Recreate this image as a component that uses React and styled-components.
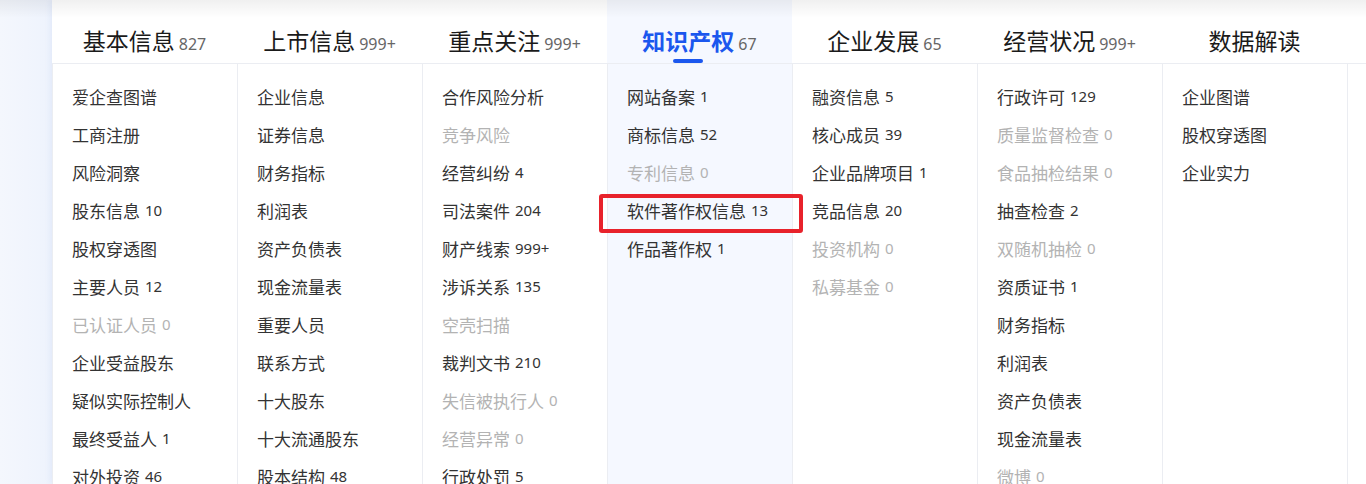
import React from "react";
import styled, { createGlobalStyle } from "styled-components";

const GlobalStyle = createGlobalStyle`
  html, body {
    margin: 0;
    padding: 0;
    height: 100%;
    overflow: hidden;
    background: #f3f6fd;
    font-family: "Noto Sans", "Noto Sans CJK SC", sans-serif;
  }
  #root {
    height: 100%;
  }
`;

const Page = styled.div`
  position: relative;
  display: flex;
  height: 100%;

  &::before {
    content: "";
    position: absolute;
    left: 0;
    right: 0;
    top: 0;
    height: 18px;
    background: linear-gradient(rgba(0, 0, 0, 0.06), rgba(0, 0, 0, 0));
    pointer-events: none;
    z-index: 3;
  }
`;

const Side = styled.div`
  width: 52px;
  flex-shrink: 0;
  background: linear-gradient(to right, #f4f7fd, #eef3fd);
`;

const Panel = styled.div`
  flex: 1;
  background: #fff;
  box-shadow: -2px 0 6px rgba(40, 80, 180, 0.06);
  display: flex;
  flex-direction: column;
`;

const TabBar = styled.div`
  display: grid;
  grid-template-columns: repeat(7, 185px) 1fr;
  border-bottom: 1px solid #ebedf2;
`;

const Tab = styled.div`
  position: relative;
  height: 47px;
  padding-top: 16px;
  display: flex;
  align-items: center;
  justify-content: center;
  background: ${(props) => (props.$active ? "#f5f8ff" : "transparent")};

  &::after {
    content: "";
    display: ${(props) => (props.$active ? "block" : "none")};
    position: absolute;
    left: 50%;
    bottom: 0;
    width: 30px;
    height: 4px;
    margin-left: -27px;
    border-radius: 2px;
    background: #1b57ee;
  }
`;

const TabTitle = styled.span`
  display: flex;
  align-items: baseline;
  gap: 4px;
  & > b {
    font-size: 23px;
    font-weight: ${(props) => (props.$active ? 700 : 400)};
    color: ${(props) => (props.$active ? "#1b57ee" : "#1a1a1a")};
  }
  & > span {
    font-size: 16px;
    color: #666;
  }
`;

const Columns = styled.div`
  flex: 1;
  display: grid;
  grid-template-columns: repeat(7, 185px) 1fr;
`;

const Column = styled.div`
  padding-top: 13px;
  border-left: 1px solid #ebedf2;
  background: ${(props) => (props.$active ? "#f5f8ff" : "transparent")};
`;

const Item = styled.div`
  position: relative;
  height: 38px;
  padding-left: 19px;
  display: flex;
  align-items: center;
  gap: 5px;
  font-size: 17px;
  white-space: nowrap;
  color: ${(props) => (props.$muted ? "#b3b3b3" : "#333")};

  & > span {
    font-size: 15px;
  }

  &::after {
    content: "";
    display: ${(props) => (props.$marked ? "block" : "none")};
    position: absolute;
    left: -9px;
    right: -11px;
    top: 3px;
    bottom: -4px;
    border: 4px solid #e8222b;
    border-radius: 3px;
    z-index: 2;
  }
`;

const tabs = [
  ["基本信息", "827"],
  ["上市信息", "999+"],
  ["重点关注", "999+"],
  ["知识产权", "67"],
  ["企业发展", "65"],
  ["经营状况", "999+"],
  ["数据解读", null],
];

// [label, count, muted, marked]
const columns = [
  [
    ["爱企查图谱"],
    ["工商注册"],
    ["风险洞察"],
    ["股东信息", "10"],
    ["股权穿透图"],
    ["主要人员", "12"],
    ["已认证人员", "0", true],
    ["企业受益股东"],
    ["疑似实际控制人"],
    ["最终受益人", "1"],
    ["对外投资", "46"],
  ],
  [
    ["企业信息"],
    ["证券信息"],
    ["财务指标"],
    ["利润表"],
    ["资产负债表"],
    ["现金流量表"],
    ["重要人员"],
    ["联系方式"],
    ["十大股东"],
    ["十大流通股东"],
    ["股本结构", "48"],
  ],
  [
    ["合作风险分析"],
    ["竞争风险", null, true],
    ["经营纠纷", "4"],
    ["司法案件", "204"],
    ["财产线索", "999+"],
    ["涉诉关系", "135"],
    ["空壳扫描", null, true],
    ["裁判文书", "210"],
    ["失信被执行人", "0", true],
    ["经营异常", "0", true],
    ["行政处罚", "5"],
  ],
  [
    ["网站备案", "1"],
    ["商标信息", "52"],
    ["专利信息", "0", true],
    ["软件著作权信息", "13", false, true],
    ["作品著作权", "1"],
  ],
  [
    ["融资信息", "5"],
    ["核心成员", "39"],
    ["企业品牌项目", "1"],
    ["竞品信息", "20"],
    ["投资机构", "0", true],
    ["私募基金", "0", true],
  ],
  [
    ["行政许可", "129"],
    ["质量监督检查", "0", true],
    ["食品抽检结果", "0", true],
    ["抽查检查", "2"],
    ["双随机抽检", "0", true],
    ["资质证书", "1"],
    ["财务指标"],
    ["利润表"],
    ["资产负债表"],
    ["现金流量表"],
    ["微博", "0", true],
  ],
  [["企业图谱"], ["股权穿透图"], ["企业实力"]],
];

const ACTIVE = 3;

function App() {
  return (
    <>
      <GlobalStyle />
      <Page>
        <Side />
        <Panel>
          <TabBar>
            {tabs.map(([title, count], i) => (
              <Tab key={title} $active={i === ACTIVE}>
                <TabTitle $active={i === ACTIVE}>
                  <b>{title}</b>
                  {count && <span>{count}</span>}
                </TabTitle>
              </Tab>
            ))}
            <div />
          </TabBar>
          <Columns>
            {columns.map((items, i) => (
              <Column key={i} $active={i === ACTIVE}>
                {items.map(([label, count, muted, marked]) => (
                  <Item key={label} $muted={muted} $marked={marked}>
                    {label}
                    {count && <span>{count}</span>}
                  </Item>
                ))}
              </Column>
            ))}
            <Column />
          </Columns>
        </Panel>
      </Page>
    </>
  );
}

export default App;
